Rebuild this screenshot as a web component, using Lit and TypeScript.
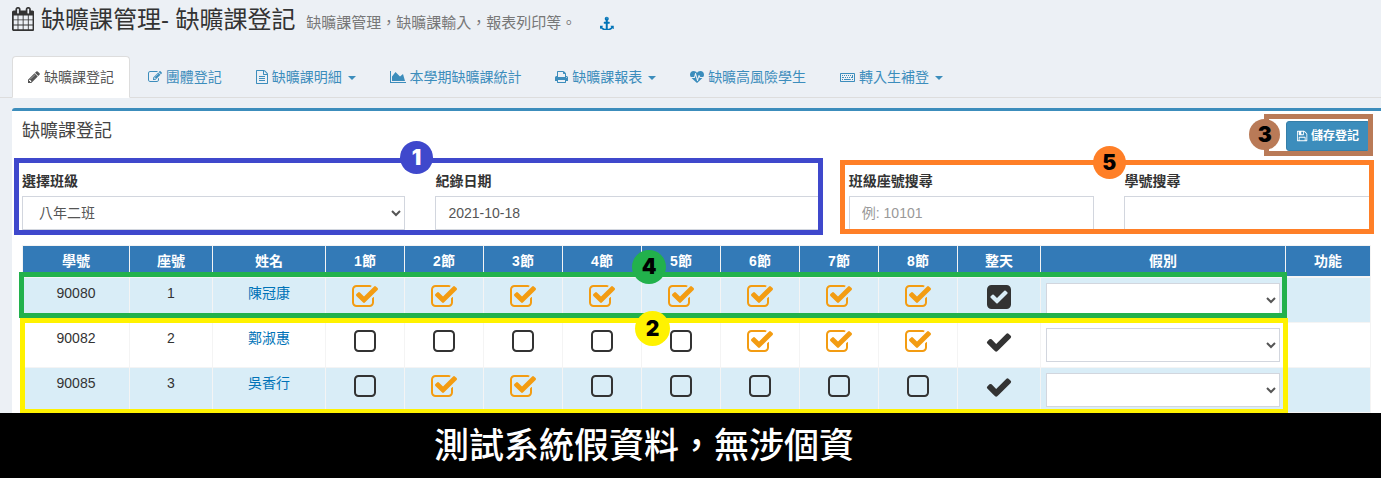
import { LitElement, html, css, svg, nothing } from "lit";
import { customElement, property, state } from "lit/decorators.js";
import { classMap } from "lit/directives/class-map.js";

interface Glyph {
  box: string;
  d: string;
}

const GLYPHS: Record<string, Glyph> = {
  calendar: {
    box: "64 0 1664 1792",
    d: "M192 1664h288v-288h-288v288zm352 0h320v-288h-320v288zm-352-352h288v-320h-288v320zm352 0h320v-320h-320v320zm-352-384h288v-288h-288v288zm736 736h320v-288h-320v288zm-384-736h320v-288h-320v288zm768 736h288v-288h-288v288zm-384-352h320v-320h-320v320zm-352-864v-288q0-13-9.5-22.5t-22.5-9.5h-64q-13 0-22.5 9.5t-9.5 22.5v288q0 13 9.5 22.5t22.5 9.5h64q13 0 22.5-9.5t9.5-22.5zm736 864h288v-320h-288v320zm-384-384h320v-288h-320v288zm384 0h288v-288h-288v288zm32-480v-288q0-13-9.5-22.5t-22.5-9.5h-64q-13 0-22.5 9.5t-9.5 22.5v288q0 13 9.5 22.5t22.5 9.5h64q13 0 22.5-9.5t9.5-22.5zm384-64v1280q0 52-38 90t-90 38h-1408q-52 0-90-38t-38-90v-1280q0-52 38-90t90-38h128v-96q0-66 47-113t113-47h64q66 0 113 47t47 113v96h384v-96q0-66 47-113t113-47h64q66 0 113 47t47 113v96h128q52 0 90 38t38 90z",
  },
  anchor: {
    box: "0 0 1792 1792",
    d: "M960 256q0-26-19-45t-45-19-45 19-19 45 19 45 45 19 45-19 19-45zm800 1024v352q0 22-20 30-8 2-12 2-12 0-23-9l-93-93q-119 143-318.5 226.5t-429.5 83.5-429.5-83.5-318.5-226.5l-93 93q-9 9-23 9-4 0-12-2-20-8-20-30v-352q0-14 9-23t23-9h352q22 0 30 20 8 19-7 35l-100 100q67 91 189.5 153.5t271.5 82.5v-647h-192q-26 0-45-19t-19-45v-128q0-26 19-45t45-19h192v-163q-58-34-93-92.5t-35-128.5q0-106 75-181t181-75 181 75 75 181q0 70-35 128.5t-93 92.5v163h192q26 0 45 19t19 45v128q0 26-19 45t-45 19h-192v647q149-20 271.5-82.5t189.5-153.5l-100-100q-15-16-7-35 8-20 30-20h352q14 0 23 9t9 23z",
  },
  pencil: {
    box: "128 0 1536 1792",
    d: "M491 1536l91-91-235-235-91 91v107h128v128h107zm523-928q0-22-22-22-10 0-17 7l-542 542q-7 7-7 17 0 22 22 22 10 0 17-7l542-542q7-7 7-17zm-54-192l416 416-832 832h-416v-416zm683 96q0 53-37 90l-166 166-416-416 166-165q36-38 90-38 53 0 91 38l235 234q37 39 37 91z",
  },
  edit: {
    box: "0 0 1792 1792",
    d: "M888 1184l116-116-152-152-116 116v56h96v96h56zm440-720q-16-16-33 1l-350 350q-17 17-1 33t33-1l350-350q17-17 1-33zm80 594v190q0 119-84.5 203.5t-203.5 84.5h-832q-119 0-203.5-84.5t-84.5-203.5v-832q0-119 84.5-203.5t203.5-84.5h832q63 0 117 25 15 7 18 23 3 17-9 29l-49 49q-14 14-32 8-23-6-45-6h-832q-66 0-113 47t-47 113v832q0 66 47 113t113 47h832q66 0 113-47t47-113v-126q0-13 9-22l64-64q15-15 35-7t20 29zm-96-738l288 288-672 672h-288v-288zm444 132l-92 92-288-288 92-92q28-28 68-28t68 28l152 152q28 28 28 68t-28 68z",
  },
  file: {
    box: "128 0 1536 1792",
    d: "M1596 380q28 28 48 76t20 88v1152q0 40-28 68t-68 28h-1344q-40 0-68-28t-28-68v-1600q0-40 28-68t68-28h896q40 0 88 20t76 48zm-444-244v376h376q-10-29-22-41l-313-313q-12-12-41-22zm384 1528v-1024h-416q-40 0-68-28t-28-68v-416h-768v1536h1280zm-1024-864q0-14 9-23t23-9h704q14 0 23 9t9 23v64q0 14-9 23t-23 9h-704q-14 0-23-9t-9-23v-64zm736 224q14 0 23 9t9 23v64q0 14-9 23t-23 9h-704q-14 0-23-9t-9-23v-64q0-14 9-23t23-9h704zm0 256q14 0 23 9t9 23v64q0 14-9 23t-23 9h-704q-14 0-23-9t-9-23v-64q0-14 9-23t23-9h704z",
  },
  chart: {
    box: "0 0 2048 1792",
    d: "M2048 1536v128h-2048v-1536h128v1408h1920zm-384-1024l256 896h-1664v-576l448-576 576 576z",
  },
  print: {
    box: "64 0 1664 1792",
    d: "M448 1536h896v-256h-896v256zm0-640h896v-384h-160q-40 0-68-28t-28-68v-160h-640v640zm1152 64q0-26-19-45t-45-19-45 19-19 45 19 45 45 19 45-19 19-45zm128 0v416q0 13-9.5 22.5t-22.5 9.5h-224v160q0 40-28 68t-68 28h-960q-40 0-68-28t-28-68v-160h-224q-13 0-22.5-9.5t-9.5-22.5v-416q0-79 56.5-135.5t135.5-56.5h64v-544q0-40 28-68t68-28h672q40 0 88 20t76 48l152 152q28 28 48 76t20 88v256h64q79 0 135.5 56.5t56.5 135.5z",
  },
  heart: {
    box: "0 0 1792 1792",
    d: "M1280 1024h305q-5 6-10 10.5t-9 7.5l-3 4-623 600q-18 18-44 18t-44-18l-624-602q-5-2-21-20h369q22 0 39.5-13.5t22.5-34.5l70-281 190 667q6 20 23 33t39 13q21 0 38-13t23-33l146-485 56 112q18 35 57 35zm512-428q0 145-103 300h-369l-111-221q-8-17-25.5-27t-36.5-8q-45 5-56 46l-129 430-196-686q-6-20-23.5-33t-39.5-13-39 13.5-22 34.5l-116 464h-423q-103-155-103-300 0-220 127-344t351-124q62 0 126.5 21.5t120 58 95.5 68.5 76 68q36-36 76-68t95.5-68.5 120-58 126.5-21.5q224 0 351 124t127 344z",
  },
  keyboard: {
    box: "0 0 1920 1792",
    d: "M128 384h1664q53 0 90.500 37.500t37.500 90.500v896q0 53-37.500 90.500t-90.500 37.500h-1664q-53 0-90.500-37.500t-37.500-90.500v-896q0-53 37.500-90.500t90.500-37.500zm0 128v896h1664v-896zM256 1152h128v128h-128zM512 1152h864v128h-864zM1536 1152h128v128h-128zM256 896h256v128h-256zM640 896h128v128h-128zM896 896h128v128h-128zM1152 896h128v128h-128zM1408 896h256v128h-256zM256 640h128v128h-128zM512 640h128v128h-128zM768 640h128v128h-128zM1024 640h128v128h-128zM1280 640h128v128h-128zM1536 640h128v256h-128z",
  },
  save: {
    box: "128 0 1536 1792",
    d: "M512 1536h768v-384h-768v384zm896 0h128v-896q0-14-10-38.5t-20-34.5l-281-281q-10-10-34-20t-39-10v416q0 40-28 68t-68 28h-576q-40 0-68-28t-28-68v-416h-128v1280h128v-416q0-40 28-68t68-28h832q40 0 68 28t28 68v416zm-384-928v-320q0-13-9.5-22.5t-22.5-9.5h-192q-13 0-22.5 9.5t-9.5 22.5v320q0 13 9.5 22.5t22.5 9.5h192q13 0 22.5-9.5t9.5-22.5zm640 32v928q0 40-28 68t-68 28h-1344q-40 0-68-28t-28-68v-1344q0-40 28-68t68-28h928q40 0 88 20t76 48l280 280q28 28 48 76t20 88z",
  },
  check: {
    box: "0 0 1792 1792",
    d: "M1671 566q0 40-28 68l-724 724-136 136q-28 28-68 28t-68-28l-136-136-362-362q-28-28-28-68t28-68l136-136q28-28 68-28t68 28l294 295 656-657q28-28 68-28t68 28l136 136q28 28 28 68z",
  },
  checkSquare: {
    box: "0 0 1792 1792",
    d: "M813 1299l614-614q19-19 19-45t-19-45l-102-102q-19-19-45-19t-45 19l-467 467-211-211q-19-19-45-19t-45 19l-102 102q-19 19-19 45t19 45l358 358q19 19 45 19t45-19zm851-883v960q0 119-84.5 203.5t-203.5 84.5h-960q-119 0-203.5-84.5t-84.5-203.5v-960q0-119 84.5-203.5t203.5-84.5h960q119 0 203.5 84.5t84.5 203.5z",
  },
  ticked: {
    box: "0 0 1792 1792",
    d: "M1472 930v318q0 119-84.5 203.5t-203.5 84.5h-832q-119 0-203.5-84.5t-84.5-203.5v-832q0-119 84.5-203.5t203.5-84.5h832q63 0 117 25 15 7 18 23 3 17-9 29l-49 49q-10 10-23 10-3 0-9-2-23-6-45-6h-832q-66 0-113 47t-47 113v832q0 66 47 113t113 47h832q66 0 113-47t47-113v-254q0-13 9-22l64-64q10-10 23-10 6 0 12 3 20 8 20 29zm231-489l-814 814q-24 24-57 24t-57-24l-430-430q-24-24-24-57t24-57l110-110q24-24 57-24t57 24l263 263 647-647q24-24 57-24t57 24l110 110q24 24 24 57t-24 57z",
  },
  empty: {
    box: "0 0 1792 1792",
    d: "M1312 256h-832q-66 0-113 47t-47 113v832q0 66 47 113t113 47h832q66 0 113-47t47-113v-832q0-66-47-113t-113-47zm288 160v832q0 119-84.5 203.5t-203.5 84.5h-832q-119 0-203.5-84.5t-84.5-203.5v-832q0-119 84.5-203.5t203.5-84.5h832q119 0 203.5 84.5t84.5 203.5z",
  },
};

const icon = (name: string) => {
  const g = GLYPHS[name];
  return html`<svg class="icon" viewBox=${g.box} aria-hidden="true">
    ${svg`<path fill-rule="evenodd" d=${g.d}></path>`}
  </svg>`;
};

const iconStyles = css`
  .icon {
    height: 14px;
    width: auto;
    fill: currentColor;
    vertical-align: -2px;
  }
`;

const TABS = [
  { icon: "pencil", text: "缺曠課登記" },
  { icon: "edit", text: "團體登記" },
  { icon: "file", text: "缺曠課明細", menu: true },
  { icon: "chart", text: "本學期缺曠課統計" },
  { icon: "print", text: "缺曠課報表", menu: true },
  { icon: "heart", text: "缺曠高風險學生" },
  { icon: "keyboard", text: "轉入生補登", menu: true },
];

interface Student {
  id: string;
  seat: number;
  name: string;
  absent: boolean[];
}

const PERIODS = [1, 2, 3, 4, 5, 6, 7, 8];

const periodsFrom = (...ticked: number[]) => PERIODS.map((p) => ticked.includes(p));

@customElement("attendance-table")
class AttendanceTable extends LitElement {
  @state() private students: Student[] = [
    { id: "90080", seat: 1, name: "陳冠康", absent: periodsFrom(...PERIODS) },
    { id: "90082", seat: 2, name: "鄭淑惠", absent: periodsFrom(6, 7, 8) },
    { id: "90085", seat: 3, name: "吳香行", absent: periodsFrom(2, 3) },
  ];

  static styles = [
    iconStyles,
    css`
      :host {
        display: block;
      }
      table {
        width: 100%;
        table-layout: fixed;
        border-collapse: collapse;
        border: 1px solid #f4f4f4;
        text-align: center;
      }
      .w-id {
        width: 107px;
      }
      .w-seat {
        width: 83px;
      }
      .w-name {
        width: 113px;
      }
      .w-period {
        width: 79px;
      }
      .w-leave {
        width: 245px;
      }
      .w-tail {
        width: 85px;
      }
      th {
        padding: 5px;
        background: #337ab7;
        color: #fff;
        font-weight: 700;
        line-height: 20px;
        border: 1px solid #f4f4f4;
        border-bottom-width: 2px;
      }
      td {
        padding: 5px;
        vertical-align: top;
        line-height: 20px;
        border: 1px solid #f4f4f4;
      }
      tbody tr:nth-child(odd) {
        background: #d9edf7;
      }
      a {
        color: #0073b7;
        text-decoration: none;
      }
      .tick {
        display: grid;
        justify-content: center;
        color: #333;
        cursor: pointer;
      }
      .tick.on {
        color: #f39c12;
      }
      .tick input {
        grid-area: 1 / 1;
        appearance: none;
        margin: 0;
      }
      .tick .icon {
        grid-area: 1 / 1;
      }
      .tick .icon,
      .all .icon {
        display: block;
        height: 28px;
      }
      .all {
        display: block;
        margin: 0 auto;
        padding: 0;
        border: 0;
        background: none;
        color: #333;
        cursor: pointer;
      }
      select {
        display: block;
        width: 100%;
        height: 34px;
        padding: 6px 12px;
        box-sizing: border-box;
        border: 1px solid #d2d6de;
        border-radius: 0;
        background: #fff;
        color: #555;
        font: inherit;
      }
    `,
  ];

  private setAbsent(row: number, absent: boolean[]) {
    this.students = this.students.map((s, i) => (i === row ? { ...s, absent } : s));
  }

  render() {
    return html`
      <table>
        <colgroup>
          <col class="w-id" />
          <col class="w-seat" />
          <col class="w-name" />
          ${PERIODS.map(() => html`<col class="w-period" />`)}
          <col class="w-seat" />
          <col class="w-leave" />
          <col class="w-tail" />
        </colgroup>
        <thead>
          <tr>
            <th>學號</th>
            <th>座號</th>
            <th>姓名</th>
            ${PERIODS.map((p) => html`<th>${p}節</th>`)}
            <th>整天</th>
            <th>假別</th>
            <th>功能</th>
          </tr>
        </thead>
        <tbody>
          ${this.students.map((s, row) => {
            const all = s.absent.every(Boolean);
            return html`<tr>
              <td>${s.id}</td>
              <td>${s.seat}</td>
              <td><a href="#">${s.name}</a></td>
              ${s.absent.map(
                (on, i) => html`<td>
                  <label class=${classMap({ tick: true, on })}>
                    <input
                      type="checkbox"
                      aria-label="${s.name} ${i + 1}節"
                      .checked=${on}
                      @change=${() =>
                        this.setAbsent(row, s.absent.map((v, j) => (j === i ? !v : v)))}
                    />
                    ${icon(on ? "ticked" : "empty")}
                  </label>
                </td>`
              )}
              <td>
                <button
                  class="all"
                  type="button"
                  aria-label="${s.name} 整天"
                  aria-pressed=${all}
                  @click=${() => this.setAbsent(row, s.absent.map(() => !all))}
                >
                  ${icon(all ? "checkSquare" : "check")}
                </button>
              </td>
              <td><select aria-label="${s.name} 假別"><option></option></select></td>
              <td></td>
            </tr>`;
          })}
        </tbody>
      </table>
    `;
  }
}

@customElement("callout-frame")
class CalloutFrame extends LitElement {
  @property() label = "";

  static styles = css`
    :host {
      position: absolute;
      box-sizing: border-box;
      border: 5px solid var(--tone);
      pointer-events: none;
    }
    .badge {
      position: absolute;
      top: var(--badge-top);
      left: var(--badge-left);
      display: grid;
      place-items: center;
      width: var(--badge-size, 33px);
      height: var(--badge-size, 33px);
      border-radius: 50%;
      background: var(--tone);
      color: var(--ink, #000);
      font: 900 21px/24px Inter, "Liberation Sans", sans-serif;
    }
  `;

  render() {
    return html`<span class="badge">${this.label}</span>`;
  }
}

@customElement("app-root")
class AppRoot extends LitElement {
  static styles = [
    iconStyles,
    css`
      :host {
        display: block;
        background: #ecf0f5;
        color: #333;
        font: 14px/20px "Liberation Sans", "Noto Sans CJK TC", sans-serif;
      }
      .heading {
        display: flex;
        align-items: baseline;
        padding: 7px 12px 20px;
      }
      h1 {
        margin: 0;
        font-size: 24px;
        font-weight: 400;
        line-height: 26px;
      }
      h1 .icon {
        height: 24px;
        vertical-align: -3px;
      }
      h1 small {
        padding-left: 4px;
        font-size: 15px;
        color: #777;
      }
      .pin {
        margin-left: 24px;
        color: #0073b7;
      }
      nav {
        display: flex;
        gap: 2px;
        padding-left: 12px;
        margin-bottom: 10px;
        border-bottom: 1px solid #ddd;
      }
      .tab {
        padding: 10px 15px;
        margin-bottom: -1px;
        border: 1px solid transparent;
        border-radius: 4px 4px 0 0;
        color: #3c8dbc;
        text-decoration: none;
        white-space: nowrap;
      }
      .tab.active {
        background: #fff;
        border-color: #ddd;
        border-bottom-color: #fff;
        color: #555;
      }
      .caret {
        display: inline-block;
        margin-left: 2px;
        vertical-align: middle;
        border-top: 4px solid;
        border-left: 4px solid transparent;
        border-right: 4px solid transparent;
      }
      .panel {
        margin-left: 12px;
        padding: 0 11px 0 10px;
        background: #fff;
        border-top: 3px solid #3c8dbc;
        border-radius: 3px 0 0 0;
      }
      .panel-head {
        display: flex;
        justify-content: space-between;
        align-items: flex-start;
        padding: 10px 0;
      }
      h2 {
        margin: 0;
        font-size: 18px;
        font-weight: 400;
        line-height: 20px;
        color: #444;
      }
      .anchor {
        position: relative;
      }
      .save {
        display: block;
        padding: 5px 10px;
        border: 1px solid #367fa9;
        border-radius: 3px;
        background: #3c8dbc;
        color: #fff;
        font: 700 12px/18px "Liberation Sans", "Noto Sans CJK TC", sans-serif;
      }
      .save .icon {
        height: 12px;
      }
      .filters {
        display: flex;
        margin: 0 -15px;
        padding: 10px 0 15px;
      }
      .group {
        box-sizing: border-box;
        width: 60%;
        padding: 0 15px;
      }
      .group.narrow {
        width: 40%;
      }
      .fields {
        position: relative;
        display: grid;
        grid-template-columns: 1fr 1fr;
        gap: 30px;
      }
      .field label {
        display: block;
        margin-bottom: 5px;
        font-weight: 700;
      }
      .field input,
      .field select {
        display: block;
        width: 100%;
        height: 34px;
        padding: 6px 12px;
        box-sizing: border-box;
        border: 1px solid #d2d6de;
        border-radius: 0;
        background: #fff;
        color: #555;
        font: inherit;
      }
      .field input::placeholder {
        color: #999;
      }
      .frame-class {
        --tone: #3f48cc;
        --ink: #fff;
        --badge-top: -22px;
        --badge-left: 381px;
        inset: -13px -4px -5px -8px;
      }
      .frame-search {
        --tone: #ff7f27;
        --badge-top: -19px;
        --badge-left: 248px;
        inset: -11px -4px -4px -9px;
      }
      .frame-save {
        --tone: #b97a57;
        --badge-top: 0px;
        --badge-left: -20px;
        --badge-size: 31px;
        inset: -7px -3px -5px -22px;
      }
      .frame-row {
        --tone: #22b14c;
        --badge-top: -27px;
        --badge-left: 608px;
        --badge-size: 34px;
        top: 27px;
        left: -3px;
        right: 83px;
        height: 46px;
      }
      .frame-rest {
        --tone: #fff200;
        --badge-top: -12px;
        --badge-left: 610px;
        --badge-size: 35px;
        top: 73px;
        left: -2px;
        right: 82px;
        bottom: -1px;
      }
      footer {
        position: relative;
        padding: 12px 0 17px 434px;
        background: #000;
        color: #fff;
        font-family: "Noto Sans CJK TC", sans-serif;
        font-size: 35px;
        font-weight: 500;
        line-height: 36px;
      }
    `,
  ];

  @state() private active = 0;

  render() {
    return html`
      <header class="heading">
        <h1>${icon("calendar")} 缺曠課管理- 缺曠課登記 <small>缺曠課管理，缺曠課輸入，報表列印等。</small></h1>
        <a class="pin" href="#" aria-label="anchor">${icon("anchor")}</a>
      </header>
      <nav>
        ${TABS.map(
          (t, i) => html`<a
            href="#"
            class=${classMap({ tab: true, active: i === this.active })}
            @click=${() => (this.active = i)}
            >${icon(t.icon)} ${t.text}${t.menu ? html` <span class="caret"></span>` : nothing}</a
          >`
        )}
      </nav>
      <main class="panel">
        <div class="panel-head">
          <h2>缺曠課登記</h2>
          <div class="anchor">
            <button class="save" type="button">${icon("save")} 儲存登記</button>
            <callout-frame class="frame-save" label="3"></callout-frame>
          </div>
        </div>
        <form class="filters">
          <div class="group">
            <div class="fields">
              <div class="field">
                <label for="class">選擇班級</label>
                <select id="class"><option>八年二班</option></select>
              </div>
              <div class="field">
                <label for="date">紀錄日期</label>
                <input id="date" type="text" value="2021-10-18" />
              </div>
              <callout-frame class="frame-class" label="1"></callout-frame>
            </div>
          </div>
          <div class="group narrow">
            <div class="fields">
              <div class="field">
                <label for="seat">班級座號搜尋</label>
                <input id="seat" type="text" placeholder="例: 10101" />
              </div>
              <div class="field">
                <label for="number">學號搜尋</label>
                <input id="number" type="text" />
              </div>
              <callout-frame class="frame-search" label="5"></callout-frame>
            </div>
          </div>
        </form>
        <div class="anchor">
          <attendance-table></attendance-table>
          <callout-frame class="frame-row" label="4"></callout-frame>
          <callout-frame class="frame-rest" label="2"></callout-frame>
        </div>
      </main>
      <footer>測試系統假資料，無涉個資</footer>
    `;
  }
}
